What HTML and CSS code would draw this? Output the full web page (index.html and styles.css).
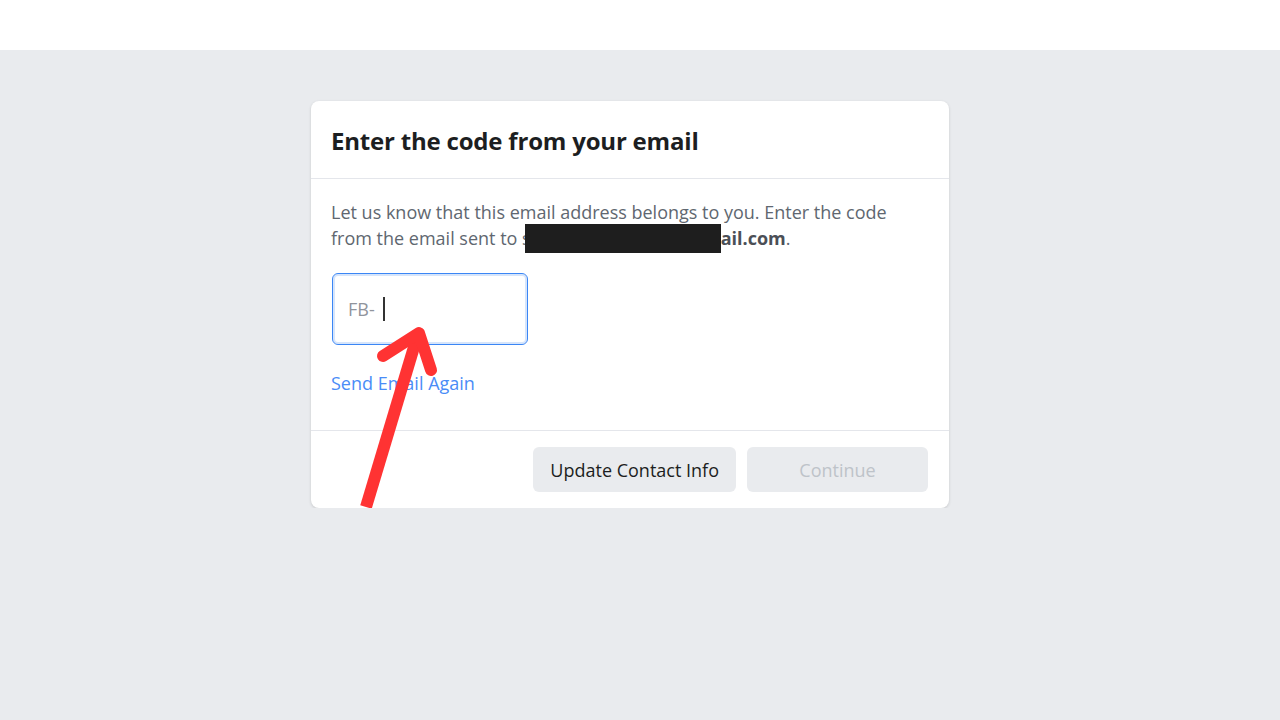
FILE: index.html
```html
<!DOCTYPE html>
<html lang="en">
  <head>
    <meta charset="UTF-8" />
    <meta name="viewport" content="width=device-width, initial-scale=1.0" />
    <title>Enter the code from your email</title>
    <link rel="stylesheet" href="styles.css">
  </head>
  <body>
    <div class="topbar"></div>
    <div class="page">
      <div class="card">
        <div class="card-header">
          <h2>Enter the code from your email</h2>
        </div>
        <div class="card-body">
          <p class="info">Let us know that this email address belongs to you. Enter the code from the email sent to s<span class="redacted"></span><b>ail.com</b>.</p>
          <div class="code-box">
            <span class="prefix">FB-</span>
            <span class="caret"></span>
          </div>
          <a class="resend" href="#">Send Email Again</a>
        </div>
        <div class="card-footer">
          <button class="btn">Update Contact Info</button>
          <button class="btn disabled" disabled>Continue</button>
        </div>
        <svg class="arrow" width="100" height="190" viewBox="0 0 100 190">
          <path class="shaft" d="M7 184 L58 14" />
          <path d="M24 33 L60 10 L72 47" />
        </svg>
      </div>
    </div>
  </body>
</html>
```

FILE: styles.css
```css
body {
  margin: 0;
  font-family: "Open Sans", "Noto Sans", sans-serif;
  background-color: #e9ebee;
  color: #1c1e21;
}
.topbar {
  height: 50px;
  background-color: #fff;
}
.page {
  display: flex;
  justify-content: center;
  padding: 51px 20px 0 0;
}
.card {
  position: relative;
  width: 638px;
  background-color: #fff;
  border-radius: 8px;
  box-shadow: 0 1px 3px rgba(0, 0, 0, 0.15);
}
.card-header {
  height: 78px;
  box-sizing: border-box;
  display: flex;
  align-items: center;
  padding: 2px 20px 0;
  border-bottom: 1px solid #e4e6eb;
}
h2 {
  margin: 0;
  font-size: 24px;
  font-weight: bold;
  letter-spacing: -0.2px;
  color: #1c1e21;
}
.card-body {
  padding: 21px 30px 35px 20px;
  border-bottom: 1px solid #e4e6eb;
}
.info {
  margin: 0;
  font-size: 18px;
  line-height: 24px;
  color: #606770;
}
.info b {
  color: #4b4f56;
}
.redacted {
  display: inline-block;
  width: 196px;
  height: 29px;
  margin-left: -6px;
  vertical-align: -8px;
  background-color: #1e1e1e;
}
.code-box {
  margin-top: 20px;
  width: 196px;
  height: 72px;
  box-sizing: border-box;
  border: 1px solid #3b86f5;
  border-radius: 6px;
  box-shadow: inset 0 0 0 2px #d6e5fb;
  display: flex;
  align-items: center;
  padding-left: 15px;
  margin-left: 1px;
}
.prefix {
  font-size: 18px;
  color: #90949c;
}
.caret {
  width: 2px;
  height: 24px;
  margin-left: 8px;
  background-color: #333;
}
.resend {
  display: inline-block;
  margin-top: 26px;
  font-size: 18px;
  color: #4a8cf7;
  text-decoration: none;
}
.card-footer {
  display: flex;
  justify-content: flex-end;
  gap: 11px;
  padding: 16px 21px 16px;
}
.btn {
  height: 45px;
  padding: 0 17px;
  border: none;
  border-radius: 6px;
  background-color: #e9ebee;
  font-family: inherit;
  font-size: 18px;
  font-weight: 500;
  color: #1c1e21;
}
.btn.disabled {
  width: 181px;
  color: #bec3c9;
}
.arrow {
  position: absolute;
  left: 48px;
  top: 222px;
  overflow: visible;
}
.arrow path {
  fill: none;
  stroke: #ff3333;
  stroke-width: 12;
  stroke-linecap: round;
  stroke-linejoin: round;
}
.arrow .shaft {
  stroke-linecap: butt;
}
```
